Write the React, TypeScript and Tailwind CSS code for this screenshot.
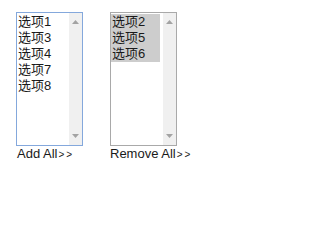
import React from "react";

const font = { fontFamily: '"Liberation Sans", "Noto Sans CJK SC", sans-serif' };

function Box({ items, selected, focused }: { items: string[]; selected: boolean; focused: boolean }) {
  return (
    <div
      className={`flex h-[134px] w-[67px] border bg-white ${focused ? "border-[#84a8dc]" : "border-[#a9a9a9]"}`}
    >
      <div className={`flex-1 pt-[1px] ${selected ? "pr-[3px]" : "pr-[1px]"}`}>
        {items.map((t) => (
          <div
            key={t}
            className={`h-[16px] pl-[1px] text-[13px] leading-[16px] text-[#1a1a1a] ${selected ? "bg-[#cdcdcd]" : ""}`}
          >
            {t}
          </div>
        ))}
      </div>
      <div className="flex w-[13px] flex-col items-center justify-between bg-[#f0f0f0] py-[7px]">
        <svg width="7" height="4" viewBox="0 0 7 4">
          <path d="M3.5 0 L7 4 L0 4 Z" fill="#a3a3a3" />
        </svg>
        <svg width="7" height="4" viewBox="0 0 7 4">
          <path d="M0 0 L7 0 L3.5 4 Z" fill="#a3a3a3" />
        </svg>
      </div>
    </div>
  );
}

function Arrows() {
  return <span className="ml-[1px] text-[10px] tracking-[2px]">&gt;&gt;</span>;
}

export default function App() {
  return (
    <div className="flex h-[206px] gap-[27px] bg-white pl-[16px] pt-[12px]" style={font}>
      <div className="flex flex-col">
        <Box items={["选项1", "选项3", "选项4", "选项7", "选项8"]} selected={false} focused />
        <div className="whitespace-nowrap pl-[1px] text-[13px] leading-[15px] text-[#1a1a1a]">
          Add All<Arrows />
        </div>
      </div>
      <div className="flex flex-col">
        <Box items={["选项2", "选项5", "选项6"]} selected focused={false} />
        <div className="whitespace-nowrap text-[13px] leading-[15px] text-[#1a1a1a]">
          Remove All<Arrows />
        </div>
      </div>
    </div>
  );
}
